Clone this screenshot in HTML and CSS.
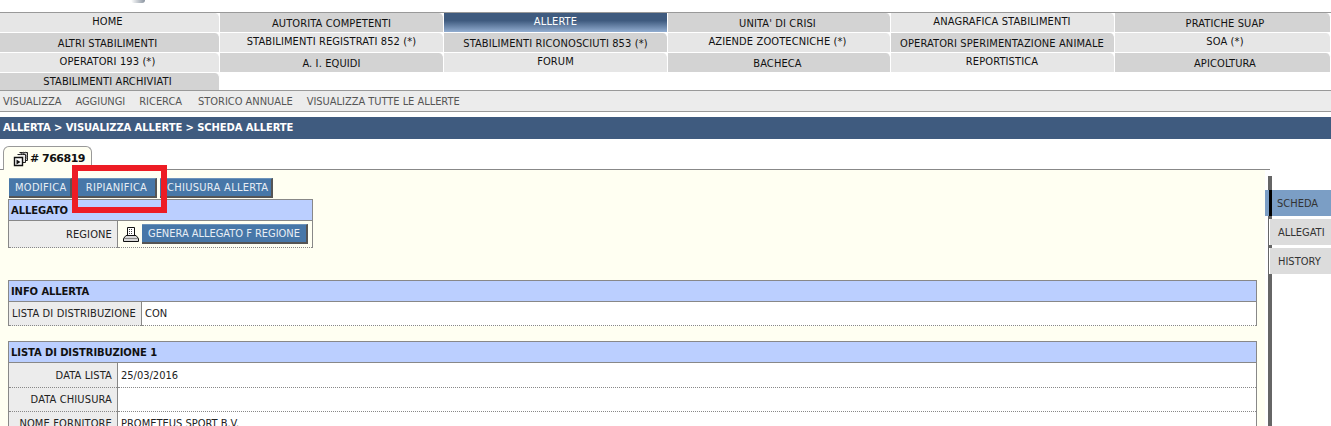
FILE: index.html
```html
<!DOCTYPE html>
<html lang="it">
<head>
<meta charset="utf-8">
<title>Scheda allerte</title>
<link rel="stylesheet" href="styles.css">
</head>
<body>
<header class="logo-strip"><span class="logo-tip"></span></header>
<nav class="menu">
  <a class="item on">HOME</a><a class="item">AUTORITA COMPETENTI</a><a class="item active">ALLERTE</a><a class="item">UNITA' DI CRISI</a><a class="item on">ANAGRAFICA STABILIMENTI</a><a class="item">PRATICHE SUAP</a>
  <a class="item">ALTRI STABILIMENTI</a><a class="item on">STABILIMENTI REGISTRATI 852 (*)</a><a class="item">STABILIMENTI RICONOSCIUTI 853 (*)</a><a class="item on">AZIENDE ZOOTECNICHE (*)</a><a class="item">OPERATORI SPERIMENTAZIONE ANIMALE</a><a class="item on">SOA (*)</a>
  <a class="item on">OPERATORI 193 (*)</a><a class="item">A. I. EQUIDI</a><a class="item on">FORUM</a><a class="item">BACHECA</a><a class="item on">REPORTISTICA</a><a class="item">APICOLTURA</a>
  <a class="item last">STABILIMENTI ARCHIVIATI</a>
</nav>
<div class="subnav"><a>VISUALIZZA</a><a>AGGIUNGI</a><a>RICERCA</a><a>STORICO ANNUALE</a><a>VISUALIZZA TUTTE LE ALLERTE</a></div>
<div class="crumb">ALLERTA &gt; VISUALIZZA ALLERTE &gt; SCHEDA ALLERTE</div>
<div class="tabline">
  <div class="tab">
    <svg class="tab-icon" width="15" height="16" viewBox="0 0 15 16"><path d="M6.500 1.500h8v8h-2" fill="#ccc" stroke="#222"/><path d="M4.500 3.500h8v8h-3" fill="#eee" stroke="#222"/><path d="M7 3.500l4-2.500M9 3.500l4-2.500M12.500 6l2-2M12.500 8l2-2" stroke="#555"/><path d="M1.500 6.500h8v8h-8z" fill="#fff" stroke="#111" stroke-width="1.400"/><path d="M3.500 8.500l4 2.500-4 2.500z" fill="#111"/></svg>
    <b># 766819</b>
  </div>
</div>
<div class="work">
  <main class="panel">
    <div class="actions"><button class="btn">MODIFICA</button><button class="btn">RIPIANIFICA</button><button class="btn">CHIUSURA ALLERTA</button></div>
    <table class="details small">
      <tr><th colspan="2">ALLEGATO</th></tr>
      <tr><td class="lab">REGIONE</td><td class="val with-btn"><div class="print-row">
        <svg class="print" width="16" height="17" viewBox="0 0 16 17"><path d="M4.500 1.500h7v8h-7z" fill="#fff" stroke="#111"/><path d="M6 3.500h4M6 5.500h4M6 7.500h4" stroke="#444" stroke-dasharray="1 1"/><path d="M3 9.500h10l2.500 3v3H.5v-3z" fill="#d8d8d8" stroke="#111"/><path d="M1 12.500h14" stroke="#888"/></svg>
        <button class="btn slim">GENERA ALLEGATO F REGIONE</button></div></td></tr>
    </table>
    <table class="details info">
      <tr><th colspan="2">INFO ALLERTA</th></tr>
      <tr><td class="lab left">LISTA DI DISTRIBUZIONE</td><td class="val">CON</td></tr>
    </table>
    <table class="details list">
      <tr><th colspan="2">LISTA DI DISTRIBUZIONE 1</th></tr>
      <tr class="first"><td class="lab">DATA LISTA</td><td class="val">25/03/2016</td></tr>
      <tr><td class="lab">DATA CHIUSURA</td><td class="val"></td></tr>
      <tr><td class="lab">NOME FORNITORE</td><td class="val">PROMETEUS SPORT B.V.</td></tr>
    </table>
    <span class="highlight"></span>
  </main>
  <aside class="side">
    <a class="side-item current">SCHEDA</a>
    <a class="side-item">ALLEGATI</a>
    <a class="side-item">HISTORY</a>
  </aside>
</div>
</body>
</html>
```
FILE: styles.css
```css
* { box-sizing: border-box; }
html, body { margin: 0; height: 426px; overflow: hidden; }
body { background: #fff; font: 11px/13px "DejaVu Sans", sans-serif; font-stretch: condensed; color: #111; }
.logo-strip { height: 12px; }
.logo-tip { display: block; width: 14px; height: 3px; margin-left: 131px; background: linear-gradient(90deg, #fff, #8a94a0); border-radius: 0 0 6px 6px; }
.menu { display: grid; grid-template-columns: 220px 224px 224px 223px 224px 216px; grid-auto-rows: 20px; border-top: 1px solid #999; height: 78px; }
.item { display: block; text-align: center; background: #d3d3d3; border-right: 1px solid #fff; border-bottom: 1px solid #fff; border-radius: 0 5px 0 0; padding-top: 4px; white-space: nowrap; letter-spacing: .12px; }
.item:nth-child(6n+1) { padding-right: 4px; }
.item:nth-child(6n+4) { padding-right: 3px; }
.item:nth-child(6n+5) { padding-right: 1px; }
.item:nth-child(6n+6) { padding-left: 5px; }
.item.on { background: #e6e6e6; padding-top: 2px; }
.item.active { background: linear-gradient(#3f5b7f 0, #3f5b7f 40%, #92add0 100%); color: #fff; padding-top: 2px; border-radius: 0; }
.item.last { border-bottom: 0; height: 17px; padding-top: 2px; }
.subnav { height: 22px; background: #ececec; border-top: 1px solid #999; border-bottom: 1px solid #999; padding: 4px 0 0 3px; display: flex; gap: 14px; color: #555; letter-spacing: -.03px; }
.subnav a:nth-child(3) { margin-right: 2px; }
.crumb { margin-top: 5px; height: 22px; background: #3f5b7f; color: #fff; font: bold 10px/22px "DejaVu Sans", sans-serif; padding-left: 3px; letter-spacing: -.1px; }
.tabline { height: 31px; width: 1270px; padding: 7px 0 0 3px; border-bottom: 1px solid #888; }
.tab { width: 89px; height: 24px; background: #fffff2; border: 1px solid #999; border-bottom: 0; border-radius: 6px 6px 0 0; display: flex; align-items: center; gap: 2px; padding-left: 9px; }
.tab b { font: bold 11px "DejaVu Sans", sans-serif; letter-spacing: -.5px; color: #111; }
.work { display: flex; height: 256px; }
.panel { width: 1265px; background: #fffff2; padding: 8px 0 0 8px; position: relative; }
.actions { display: flex; height: 21px; margin-left: 1px; }
.btn { border: 0; border-top: 1px solid #6d93ba; border-right: 2px solid #555; border-bottom: 2px solid #555; background: #4777a8; color: #e8eef5; font: 11px/13px "DejaVu Sans", sans-serif; font-stretch: condensed; letter-spacing: .3px; padding: 0 6px; height: 20px; white-space: nowrap; }
.actions .btn:nth-child(1) { width: 63px; margin-right: 6px; }
.actions .btn:nth-child(2) { width: 79px; margin-right: 3px; }
.actions .btn:nth-child(3) { width: 113px; padding: 0 0 0 7px; text-align: left; }
.details { border-collapse: collapse; width: 1249px; background: #fff; }
.details.small { width: 305px; background: transparent; }
.details th { background: #bbcfff; border: 1px solid #888; text-align: left; font: bold 10px/13px "DejaVu Sans", sans-serif; letter-spacing: -.1px; color: #111; padding: 0 2px; height: 21px; }
.details td { border: 1px dotted #888; height: 24px; padding: 0 3px; }
.details .first td { height: 25px; }
.lab { width: 109px; text-align: right; background: #ececec; border-left: 1px solid #888 !important; border-right: 1px solid #888 !important; color: #222; white-space: nowrap; letter-spacing: .13px; padding-right: 5px !important; }
.lab.left { text-align: left; width: 133px; }
.val { background: #fff; border-right: 1px solid #888 !important; color: #222; }
.small .val { background: transparent; }
.with-btn { padding: 0 !important; height: 27px !important; }
.print-row { display: flex; align-items: center; gap: 3px; padding-left: 5px; }
.slim { width: 166px; padding: 0; flex: none; letter-spacing: -.02px; }
.details.info { margin-top: 32px; }
.details.list { margin-top: 15px; }
.highlight { position: absolute; left: 72px; top: -5px; width: 95px; height: 48px; border: 6px solid #ed1c24; }
.side { flex: 1; display: flex; flex-direction: column; padding-top: 14px; margin: 6px 0 0 3px; border-left: 4px solid #666; }
.side-item { display: block; height: 26px; margin: 0 0 3px -3px; background: #dcdcdc; padding: 7px 0 0 8px; color: #333; border-left: 1px solid #fff; }
.side-item.current { background: #7b9ec5; margin-left: -7px; padding-left: 12px; border-left: 0; position: relative; }
.side-item.current::before { content: ""; position: absolute; left: 4px; top: 0; bottom: 0; width: 3px; background: #000; }
```
